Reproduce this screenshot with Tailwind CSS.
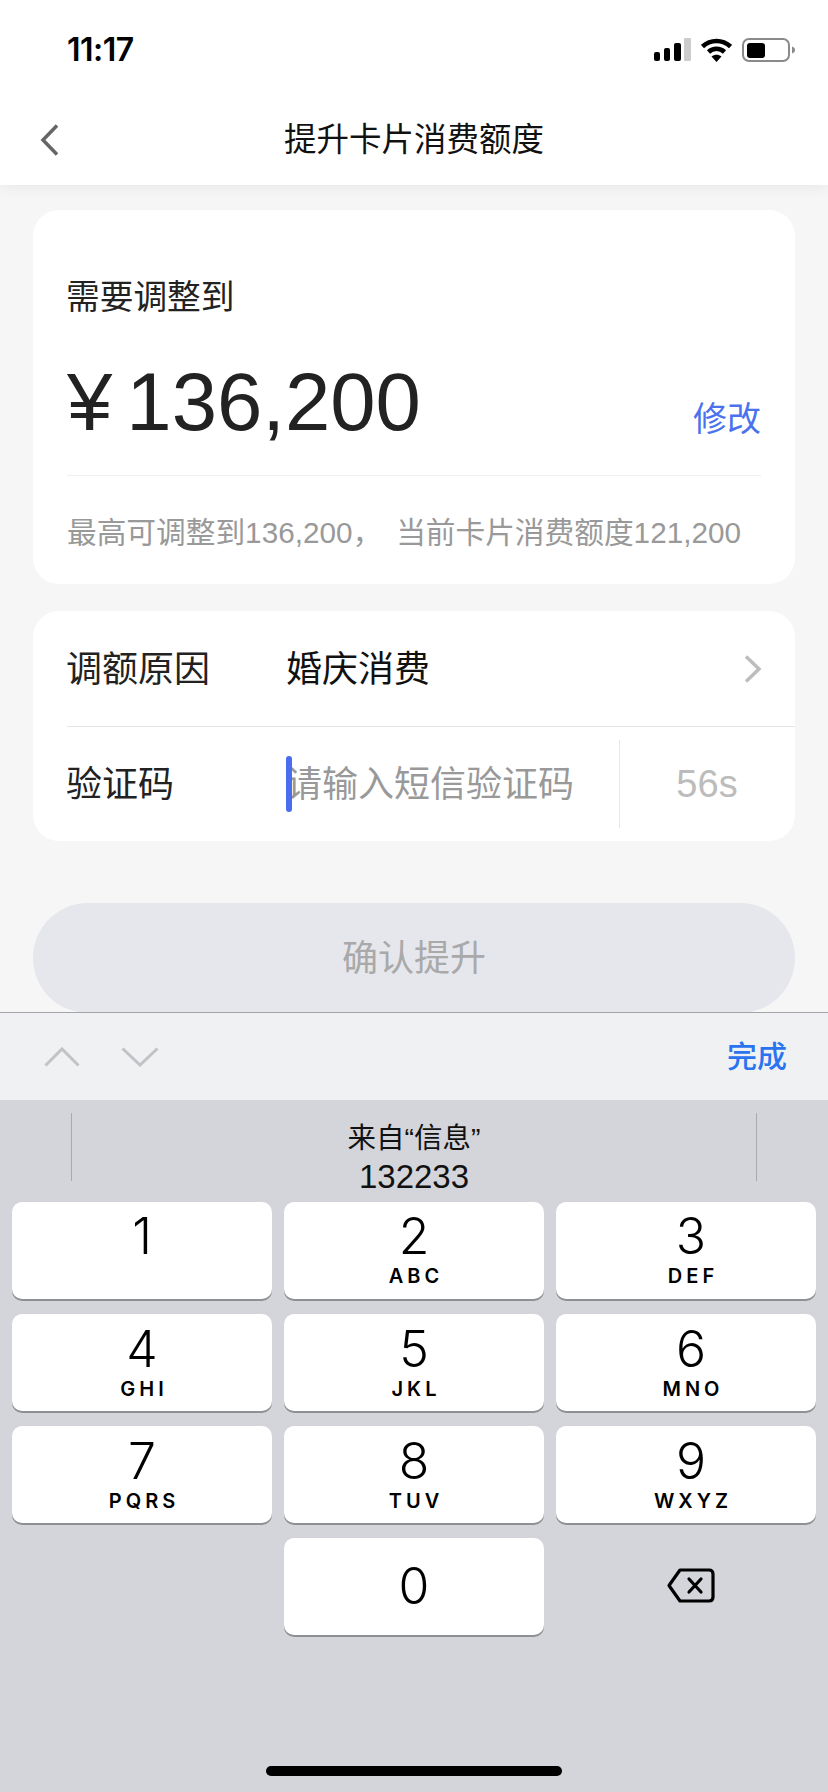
<!DOCTYPE html>
<html lang="zh-CN">
<head>
  <meta charset="UTF-8" />
  <title>提升卡片消费额度</title>
  <meta name="viewport" content="width=device-width, initial-scale=1.0" />
  <script src="https://cdn.jsdelivr.net/npm/@tailwindcss/browser@4"></script>
</head>
<body class="bg-[#f6f6f6] font-['Liberation_Sans','Noto_Sans_CJK_SC',sans-serif] text-[#222]">
  <div class="w-[828px] h-[1792px] overflow-hidden flex flex-col">

    <!-- status bar + nav -->
    <header class="relative z-10 bg-white h-[185px] shadow-[0_3px_14px_rgba(0,0,0,0.06)] shrink-0">
      <div class="h-[100px] flex justify-between pl-[67px] pr-[32px] pt-[31px]">
        <span class="font-['Inter',sans-serif] font-semibold text-[32px] leading-[38px] text-black tracking-[-0.5px]">11:17</span>
        <div class="flex items-start gap-[10px] pt-[7px]">
          <svg width="37" height="24" viewBox="0 0 37 24">
            <rect x="0" y="14" width="6" height="9" rx="2" fill="#000" />
            <rect x="10" y="10" width="6" height="13" rx="2" fill="#000" />
            <rect x="20" y="5" width="7" height="18" rx="2" fill="#000" />
            <rect x="30" y="0" width="7" height="23" rx="1" fill="#ccc" />
          </svg>
          <svg width="31" height="24" viewBox="0 0 31 24" fill="none" stroke="#000" stroke-width="4.5">
            <path d="M1.5 8.5C9.5 1 21.5 1 29.5 8.5" />
            <path d="M7.5 14C12 9.8 19 9.8 23.5 14" />
            <path d="M15.5 24L10.5 18.6C13.5 16.2 17.5 16.2 20.5 18.6Z" fill="#000" stroke="none" />
          </svg>
          <svg width="54" height="24" viewBox="0 0 54 24">
            <rect x="1" y="1" width="46" height="22" rx="6" fill="none" stroke="#8a8a8a" stroke-width="2" />
            <rect x="5" y="5" width="18" height="15" rx="3" fill="#000" />
            <path d="M50 8.5C52.5 9.5 53 10.5 53 12S52.5 14.5 50 15.5Z" fill="#8a8a8a" />
          </svg>
        </div>
      </div>
      <div class="relative flex justify-center pt-[20px]">
        <svg class="absolute left-[40px] top-[24px]" width="19" height="32" viewBox="0 0 19 32" fill="none" stroke="#666" stroke-width="3.5">
          <path d="M17 1.5L3 16L17 30.5" />
        </svg>
        <h1 class="text-[32.5px] leading-[40px] text-[#111] font-normal">提升卡片消费额度</h1>
      </div>
    </header>

    <!-- form -->
    <main class="h-[827px] shrink-0 overflow-hidden px-[33px] pt-[25px]">
      <section class="bg-white rounded-[26px] h-[374px] px-[34px] pt-[71px]">
        <p class="text-[33.7px] leading-[32px] -ml-[1px]">需要调整到</p>
        <div class="flex justify-between items-end h-[163px] border-b border-[#f0f0f0] pb-[32px]">
          <div class="flex text-[81.5px] leading-[82px]">
            <span>¥</span><span class="ml-[14px]">136,200</span>
          </div>
          <span class="text-[34px] leading-[33px] text-[#4a72ee] mb-[7px]">修改</span>
        </div>
        <p class="text-[29.7px] leading-[30px] text-[#999] mt-[42px] whitespace-nowrap">最高可调整到136,200，<span class="ml-[14px]">当前卡片消费额度121,200</span></p>
      </section>

      <section class="bg-white rounded-[26px] h-[230px] mt-[27px] pl-[34px]">
        <div class="flex items-center h-[116px] border-b border-[#e4e4e6] pr-[33px]">
          <span class="w-[220px] -ml-[1px] text-[36px] leading-[40px] pt-[3px]">调额原因</span>
          <span class="flex-1 text-[36px] leading-[40px] text-[#111] pt-[3px]">婚庆消费</span>
          <svg width="18" height="28" viewBox="0 0 18 28" fill="none" stroke="#bdbdbd" stroke-width="3.5">
            <path d="M2 1.5L15 14L2 26.5" />
          </svg>
        </div>
        <div class="flex items-center h-[114px]">
          <span class="w-[220px] -ml-[1px] text-[36px] leading-[40px] pt-[2px]">验证码</span>
          <div class="w-[333px] flex items-center">
            <span class="relative w-[6px] h-[56px] rounded-full bg-[#4a6cf0]"></span>
            <span class="-ml-[6px] text-[36px] leading-[40px] text-[#999] pt-[2px]">请输入短信验证码</span>
          </div>
          <div class="h-[88px] border-l border-[#e8e8e8] flex-1 flex items-center justify-center pr-[1px]">
            <span class="text-[38px] leading-[40px] text-[#bcbcbc]">56s</span>
          </div>
        </div>
      </section>

      <div class="mt-[62px] h-[110px] rounded-full bg-[#e6e7ec] flex items-center justify-center">
        <span class="text-[36px] leading-[40px] text-[#a9a9a9] pt-[2px]">确认提升</span>
      </div>
    </main>

    <!-- keyboard toolbar -->
    <div class="h-[88px] shrink-0 bg-[#f0f1f3] border-t border-[#a3a3a8] flex items-center justify-between pl-[44px] pr-[41px]">
      <div class="flex gap-[41px]">
        <svg width="36" height="20" viewBox="0 0 36 20" fill="none" stroke="#c2c3c6" stroke-width="3">
          <path d="M1.5 18.5L18 2L34.5 18.5" />
        </svg>
        <svg width="38" height="20" viewBox="0 0 38 20" fill="none" stroke="#c2c3c6" stroke-width="3">
          <path d="M1.5 1.5L19 18L36.5 1.5" />
        </svg>
      </div>
      <span class="text-[30px] leading-[36px] font-medium text-[#2a74ef]">完成</span>
    </div>

    <!-- number keyboard -->
    <div class="flex-1 bg-[#d4d5da] relative">
      <div class="h-[102px] flex justify-between px-[71px] pt-[13px]">
        <span class="w-px h-[68px] bg-[#a9aaae]"></span>
        <div class="text-center text-[#111]">
          <p class="text-[28.5px] leading-[34px] mt-[8px]">来自“信息”</p>
          <p class="text-[33px] leading-[36px] mt-[4px]">132233</p>
        </div>
        <span class="w-px h-[68px] bg-[#a9aaae]"></span>
      </div>
      <div class="grid grid-cols-3 gap-x-[12px] gap-y-[15px] auto-rows-[97px] px-[12px] text-black font-['Inter',sans-serif]">
        <div class="bg-white rounded-[10px] shadow-[0_2px_0_#8e8f93] text-center pt-[4px]"><p class="text-[50px] leading-[60px] font-[350]">1</p></div>
        <div class="bg-white rounded-[10px] shadow-[0_2px_0_#8e8f93] text-center pt-[4px]"><p class="text-[50px] leading-[60px] font-[350]">2</p><p class="text-[20px] leading-[20px] font-semibold tracking-[4px] pl-[4px]">ABC</p></div>
        <div class="bg-white rounded-[10px] shadow-[0_2px_0_#8e8f93] text-center pt-[4px] pl-[10px]"><p class="text-[50px] leading-[60px] font-[350]">3</p><p class="text-[20px] leading-[20px] font-semibold tracking-[4px] pl-[4px]">DEF</p></div>
        <div class="bg-white rounded-[10px] shadow-[0_2px_0_#8e8f93] text-center pt-[6px]"><p class="text-[50px] leading-[59px] font-[350]">4</p><p class="text-[20px] leading-[20px] font-semibold tracking-[4px] pl-[4px]">GHI</p></div>
        <div class="bg-white rounded-[10px] shadow-[0_2px_0_#8e8f93] text-center pt-[6px]"><p class="text-[50px] leading-[59px] font-[350]">5</p><p class="text-[20px] leading-[20px] font-semibold tracking-[4px] pl-[4px]">JKL</p></div>
        <div class="bg-white rounded-[10px] shadow-[0_2px_0_#8e8f93] text-center pt-[6px] pl-[10px]"><p class="text-[50px] leading-[59px] font-[350]">6</p><p class="text-[20px] leading-[20px] font-semibold tracking-[4px] pl-[4px]">MNO</p></div>
        <div class="bg-white rounded-[10px] shadow-[0_2px_0_#8e8f93] text-center pt-[6px]"><p class="text-[50px] leading-[59px] font-[350]">7</p><p class="text-[20px] leading-[20px] font-semibold tracking-[4px] pl-[4px]">PQRS</p></div>
        <div class="bg-white rounded-[10px] shadow-[0_2px_0_#8e8f93] text-center pt-[6px]"><p class="text-[50px] leading-[59px] font-[350]">8</p><p class="text-[20px] leading-[20px] font-semibold tracking-[4px] pl-[4px]">TUV</p></div>
        <div class="bg-white rounded-[10px] shadow-[0_2px_0_#8e8f93] text-center pt-[6px] pl-[10px]"><p class="text-[50px] leading-[59px] font-[350]">9</p><p class="text-[20px] leading-[20px] font-semibold tracking-[4px] pl-[4px]">WXYZ</p></div>
        <div></div>
        <div class="bg-white rounded-[10px] shadow-[0_2px_0_#8e8f93] flex items-center justify-center pb-[2px]"><p class="text-[50px] leading-[60px] font-[350]">0</p></div>
        <div class="flex items-center justify-center pl-[9px] pb-[2px]">
          <svg width="48" height="35" viewBox="0 0 48 35" fill="none" stroke="#000" stroke-width="3.2" stroke-linejoin="round" stroke-linecap="round">
            <path d="M13 2H42Q46 2 46 6V29Q46 33 42 33H13L2 17.5Z" />
            <path d="M22 11L34 24M34 11L22 24" />
          </svg>
        </div>
      </div>
      <div class="absolute bottom-[16px] left-[266px] w-[296px] h-[10px] rounded-full bg-black"></div>
    </div>
  </div>
</body>
</html>
